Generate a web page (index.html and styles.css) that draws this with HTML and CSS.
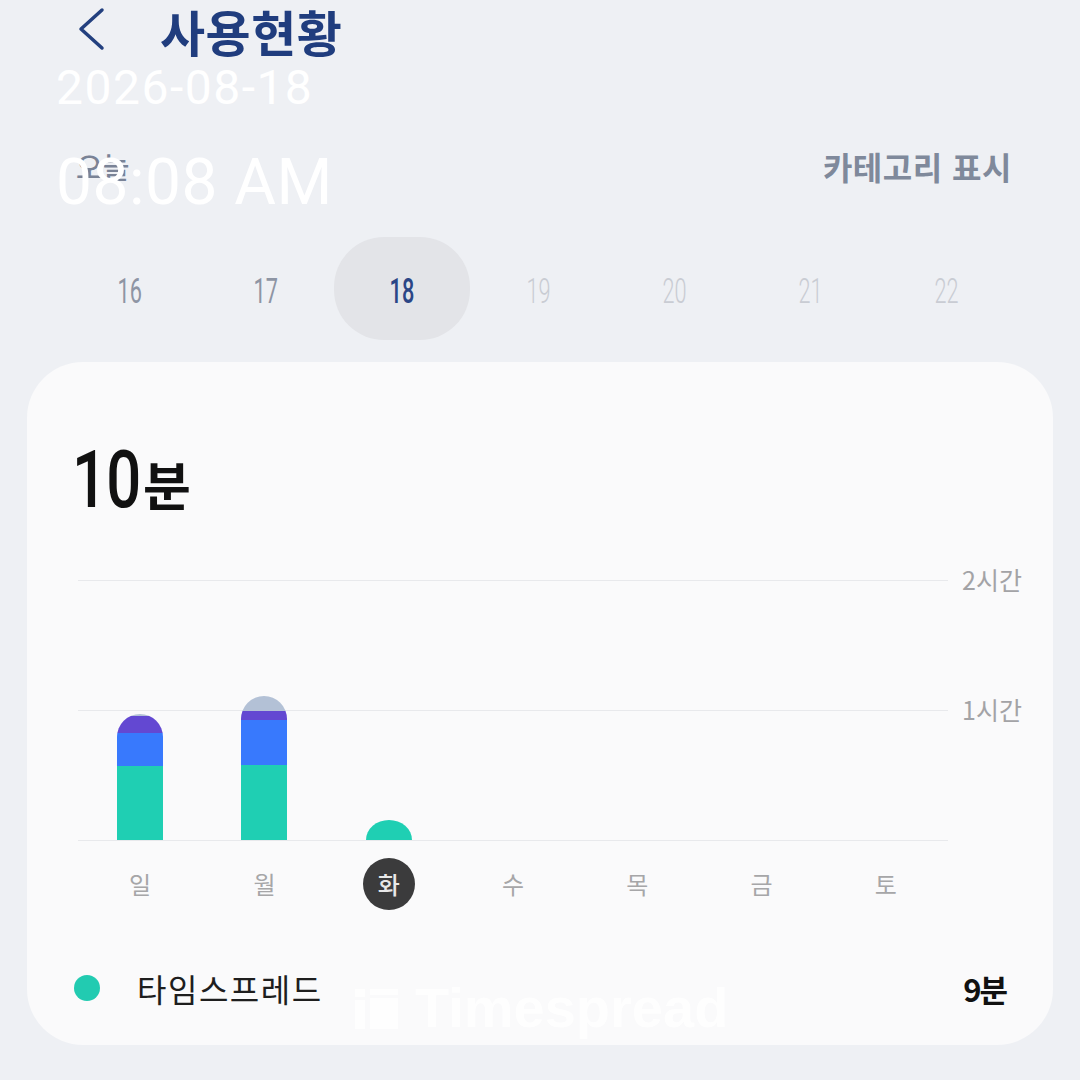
FILE: index.html
```html
<!DOCTYPE html>
<html lang="ko">
<head>
<meta charset="utf-8">
<link rel="stylesheet" href="styles.css">
</head>
<body>
<div class="screen">
  <header class="topbar">
    <svg class="back" width="30" height="44" viewBox="0 0 30 44"><path d="M26 3 L5 22 L26 41" fill="none" stroke="#23407f" stroke-width="3.5" stroke-linecap="round" stroke-linejoin="round"/></svg>
    <h1 class="title">사용현황</h1>
  </header>
  <div class="subrow">
    <span class="today">오늘</span>
    <span class="cat">카테고리 표시</span>
  </div>
  <div class="dates">
    <div class="date past"><span>16</span></div>
    <div class="date past"><span>17</span></div>
    <div class="date sel"><span>18</span></div>
    <div class="date future"><span>19</span></div>
    <div class="date future"><span>20</span></div>
    <div class="date future"><span>21</span></div>
    <div class="date future"><span>22</span></div>
  </div>
  <section class="card">
    <div class="total"><span class="num">10</span><span class="unit">분</span></div>
    <div class="chart">
      <div class="plot">
        <div class="grid g2"></div>
        <div class="grid g1"></div>
        <div class="grid g0"></div>
        <div class="col"><div class="bar"><div class="seg gray" style="height:2px"></div><div class="seg purple" style="height:17px"></div><div class="seg blue" style="height:33px"></div><div class="seg teal" style="height:74px"></div></div></div>
        <div class="col"><div class="bar"><div class="seg gray" style="height:15px"></div><div class="seg purple" style="height:9px"></div><div class="seg blue" style="height:45px"></div><div class="seg teal" style="height:75px"></div></div></div>
        <div class="col"><div class="bar small"><div class="seg teal" style="height:20px"></div></div></div>
        <div class="col"></div>
        <div class="col"></div>
        <div class="col"></div>
        <div class="col"></div>
      </div>
      <div class="ylabels">
        <span>2시간</span>
        <span>1시간</span>
      </div>
    </div>
    <div class="days">
      <span>일</span><span>월</span><span class="cur"><b>화</b></span><span>수</span><span>목</span><span>금</span><span>토</span>
    </div>
    <div class="legend">
      <span class="dot"></span>
      <span class="app">타임스프레드</span>
      <span class="time">9분</span>
    </div>
    <div class="watermark">
      <svg width="44" height="42" viewBox="0 0 44 42"><rect x="0" y="2" width="10" height="8" fill="#fff"/><rect x="0" y="13" width="10" height="29" fill="#fff"/><rect x="15" y="2" width="28" height="6" fill="#fff"/><rect x="15" y="11" width="28" height="31" fill="#fff"/></svg>
      <span>Timespread</span>
    </div>
  </section>
  <div class="stamp">
    <div class="sdate">2026-08-18</div>
    <div class="stime">08:08 AM</div>
  </div>
</div>
</body>
</html>
```
FILE: styles.css
```css
html, body {
  margin: 0;
  padding: 0;
  background: #eef0f4;
}
body {
  width: 1080px;
  height: 1080px;
  overflow: hidden;
  font-family: "Noto Sans CJK KR", "Noto Sans", sans-serif;
}
.screen {
  position: relative;
  width: 1080px;
  height: 1080px;
}
.topbar {
  height: 62px;
  display: flex;
  align-items: center;
  padding-left: 76px;
}
.back {
  display: block;
  margin-top: -4px;
}
.title {
  margin: 0 0 0 54px;
  font-size: 49px;
  font-weight: 700;
  color: #203d7e;
  letter-spacing: 0.5px;
  line-height: 62px;
}
.subrow {
  margin-top: 82px;
  height: 44px;
  display: flex;
  justify-content: space-between;
  align-items: center;
  padding: 0 68px 0 76px;
}
.today {
  font-size: 29px;
  color: #7a8396;
  font-weight: 500;
}
.cat {
  font-size: 32px;
  font-weight: 700;
  color: #7f899b;
  letter-spacing: 0.5px;
}
.dates {
  margin-top: 49px;
  display: grid;
  grid-template-columns: repeat(7, 136px);
  padding-left: 62px;
  height: 103px;
}
.date {
  display: flex;
  align-items: center;
  justify-content: center;
  font-family: "Roboto", "Noto Sans", sans-serif;
  font-size: 35px;
  font-weight: 400;
  padding-top: 6px;
}
.date span {
  display: inline-block;
  transform: scaleX(0.62);
}
.date.past { color: #8e95a4; }
.date.future { color: #c9ccd3; font-weight: 300; }
.date.sel {
  background: #e3e4e8;
  border-radius: 50px;
  color: #2b4686;
  font-weight: 500;
}
.card {
  position: relative;
  margin: 22px 0 0 27px;
  width: 1026px;
  height: 683px;
  box-sizing: border-box;
  background: #fafafb;
  border-radius: 56px;
  padding: 78px 0 0 45px;
}
.total {
  height: 80px;
  display: flex;
  align-items: center;
  color: #111;
}
.total .num {
  font-family: "Roboto", sans-serif;
  font-size: 80px;
  font-weight: 500;
  display: inline-block;
  transform: scaleX(0.77);
  transform-origin: left center;
  letter-spacing: -1px;
  margin-right: -18px;
  line-height: 1;
}
.total .unit {
  font-size: 52px;
  font-weight: 600;
  line-height: 1;
  margin-top: 8px;
}
.chart {
  margin-top: 60px;
  margin-left: 6px;
  display: flex;
}
.plot {
  position: relative;
  width: 870px;
  height: 261px;
  display: grid;
  grid-template-columns: repeat(7, 1fr);
  align-items: end;
}
.grid {
  position: absolute;
  left: 0;
  right: 0;
  height: 1px;
  background: #e8e9ec;
}
.g2 { top: 0; }
.g1 { top: 130px; }
.g0 { top: 260px; }
.col {
  display: flex;
  justify-content: center;
  align-items: flex-end;
  height: 100%;
  position: relative;
}
.bar {
  width: 46px;
  border-radius: 23px 23px 0 0;
  overflow: hidden;
  display: flex;
  flex-direction: column;
  margin-bottom: 1px;
}
.bar.small {
  border-radius: 23px 23px 0 0 / 20px 20px 0 0;
}
.seg { width: 100%; }
.teal { background: #1fcfb3; }
.blue { background: #3879fd; }
.purple { background: #6348d2; }
.gray { background: #b3c1d6; }
.ylabels {
  position: relative;
  width: 80px;
  height: 261px;
  margin-left: 14px;
}
.ylabels span {
  position: absolute;
  left: 0;
  font-size: 25px;
  color: #a3a3a6;
  line-height: 1;
}
.ylabels span:first-child { top: -13px; }
.ylabels span:last-child { top: 117px; }
.days {
  margin-top: 17px;
  margin-left: 6px;
  width: 870px;
  height: 52px;
  display: grid;
  grid-template-columns: repeat(7, 1fr);
  align-items: center;
  justify-items: center;
}
.days span {
  font-size: 24px;
  color: #a6a6a8;
  line-height: 1;
}
.days .cur {
  width: 52px;
  height: 52px;
  border-radius: 50%;
  background: #3b3b3c;
  display: flex;
  align-items: center;
  justify-content: center;
}
.days .cur b {
  font-weight: 500;
  color: #e8e8e8;
  font-size: 24px;
}
.legend {
  margin-top: 60px;
  height: 36px;
  display: flex;
  align-items: center;
  padding-right: 47px;
}
.dot {
  width: 26px;
  height: 26px;
  border-radius: 50%;
  background: #22cbb1;
  margin-left: 2px;
}
.app {
  margin-left: 37px;
  font-size: 32px;
  color: #1e1e1e;
  letter-spacing: 1.5px;
  flex: 1;
}
.time {
  font-size: 31px;
  font-weight: 700;
  color: #111;
  letter-spacing: -2px;
}
.watermark {
  position: absolute;
  left: 328px;
  top: 613px;
  display: flex;
  align-items: center;
  gap: 16px;
  opacity: 0.95;
}
.watermark span {
  font-family: "Liberation Sans", "Inter", sans-serif;
  font-weight: 700;
  font-size: 56px;
  color: #ffffff;
  letter-spacing: 0;
}
.stamp {
  position: absolute;
  left: 56px;
  top: 60px;
  color: #ffffff;
  font-family: "Roboto", "Noto Sans", sans-serif;
}
.sdate {
  font-size: 48px;
  line-height: 56px;
  letter-spacing: 1.5px;
}
.stime {
  margin-top: 32px;
  font-size: 64px;
  line-height: 70px;
  letter-spacing: 0.5px;
}
```
